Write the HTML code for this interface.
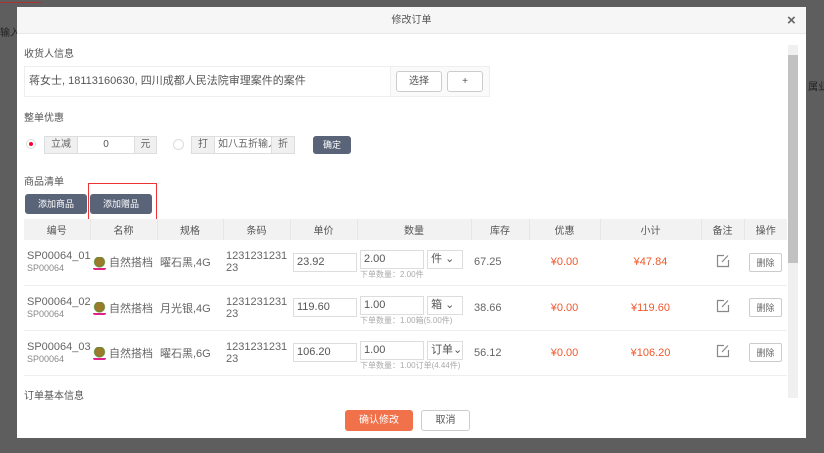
<!DOCTYPE html>
<html><head><meta charset="utf-8"><style>
*{box-sizing:border-box;margin:0;padding:0}
body{width:824px;height:453px;overflow:hidden;background:#5e5e5e;font-family:"Liberation Sans","Noto Sans CJK SC",sans-serif;font-size:10px;color:#555;position:relative}
.abs{position:absolute;white-space:nowrap}
.modal{left:17px;top:7px;width:789px;height:431px;background:#fff}
.hdr{left:0;top:0;width:789px;height:27px;background:#f6f6f6;border-bottom:1px solid #e8e8e8;text-align:center;line-height:27px;font-size:10px;color:#555}
.btn{border:1px solid #ccc;border-radius:3px;background:#fff;text-align:center;color:#555}
.dark{background:#5a6478;color:#fff;border-radius:3px;text-align:center}
.box{border:1px solid #ddd;background:#f0f0f0;text-align:center;color:#666}
table{border-collapse:collapse;position:absolute;left:24px;top:219px;width:763px;table-layout:fixed}
th{background:#f2f2f2;height:21px;font-weight:normal;color:#555;border-right:1px solid #e6e6e6;font-size:10px}
td{height:45px;border-bottom:1px solid #eee;font-size:11px;color:#666;vertical-align:middle;padding-left:3px;white-space:nowrap}
.red{color:#f0582c;font-size:11px;text-align:center;padding:0}
.inp{border:1px solid #ddd;height:19px;line-height:17px;padding-left:3px;font-size:11px;color:#555;background:#fff}
.sm{font-size:8px;color:#aaa}
.ico{display:inline-block;width:13px;height:13px;border-radius:2px;background:radial-gradient(circle at 50% 45%,#9a7a2c 0 4px,#5b8a2a 5px,#fff 6px);border-bottom:2px solid #e0218a;vertical-align:middle;margin-right:3px}
.del{display:inline-block;border:1px solid #ccc;border-radius:2px;padding:2px 6px;font-size:9px}
</style></head><body>
<div class="abs" style="left:0;top:0;width:42px;height:3px;border-bottom:1px solid #a33"></div>
<div class="abs" style="left:0;top:24px;color:#222;font-size:10px">输入</div>
<div class="abs" style="left:808px;top:78px;color:#222;font-size:10px">属业</div>
<div class="abs modal">
 <div class="abs hdr">修改订单</div>
 <div class="abs" style="left:770px;top:5px;font-size:15px;color:#666;font-weight:bold">×</div>
 <div class="abs" style="left:7px;top:38px">收货人信息</div>
 <div class="abs" style="left:7px;top:59px;width:466px;height:31px;border:1px solid #eee;background:#fafafa">
  <div class="abs" style="left:0;top:0;width:366px;height:29px;background:#fff;border-right:1px solid #eee;line-height:29px;padding-left:4px;font-size:11px">蒋女士, 18113160630, 四川成都人民法院审理案件的案件</div>
  <div class="abs btn" style="left:371px;top:4px;width:46px;height:21px;line-height:19px">选择</div>
  <div class="abs btn" style="left:422px;top:4px;width:36px;height:21px;line-height:19px">+</div>
 </div>
 <div class="abs" style="left:7px;top:102px">整单优惠</div>
 <div class="abs" style="left:9px;top:132px;width:10px;height:10px;border:1px solid #ddd;border-radius:50%;background:#fff"><div style="width:4px;height:4px;border-radius:50%;background:#f03;margin:2px"></div></div>
 <div class="abs box" style="left:27px;top:129px;width:34px;height:18px;line-height:16px">立减</div>
 <div class="abs" style="left:60px;top:129px;width:58px;height:18px;border:1px solid #ddd;text-align:center;line-height:16px">0</div>
 <div class="abs box" style="left:117px;top:129px;width:23px;height:18px;line-height:16px">元</div>
 <div class="abs" style="left:156px;top:132px;width:11px;height:11px;border:1px solid #ddd;border-radius:50%"></div>
 <div class="abs box" style="left:174px;top:129px;width:24px;height:18px;line-height:16px">打</div>
 <div class="abs" style="left:197px;top:129px;width:58px;height:18px;border:1px solid #ddd;line-height:16px;padding-left:3px;color:#666;overflow:hidden">如八五折输入</div>
 <div class="abs box" style="left:254px;top:129px;width:24px;height:18px;line-height:16px">折</div>
 <div class="abs dark" style="left:296px;top:129px;width:38px;height:18px;line-height:18px;font-size:9px">确定</div>
 <div class="abs" style="left:7px;top:166px">商品清单</div>
 <div class="abs dark" style="left:8px;top:187px;width:62px;height:20px;line-height:20px;font-size:9px">添加商品</div>
 <div class="abs dark" style="left:73px;top:187px;width:62px;height:20px;line-height:20px;font-size:9px">添加赠品</div>
 <div class="abs" style="left:71px;top:176px;width:69px;height:38px;border:1.5px solid #e33"></div>
 <div class="abs" style="left:771px;top:38px;width:10px;height:353px;background:#f0f0f0"><div style="margin-top:10px;height:208px;background:#c1c1c1"></div></div>
 <div class="abs" style="left:7px;top:380px">订单基本信息</div>
 <div class="abs" style="left:328px;top:403px;width:68px;height:21px;background:#f0714a;color:#fff;border-radius:3px;text-align:center;line-height:21px">确认修改</div>
 <div class="abs btn" style="left:404px;top:403px;width:49px;height:21px;line-height:19px">取消</div>
</div>
<table>
<colgroup><col style="width:66px"><col style="width:67px"><col style="width:66px"><col style="width:67px"><col style="width:67px"><col style="width:114px"><col style="width:58px"><col style="width:71px"><col style="width:101px"><col style="width:43px"><col style="width:43px"></colgroup>
<tr><th>编号</th><th>名称</th><th>规格</th><th>条码</th><th>单价</th><th>数量</th><th>库存</th><th>优惠</th><th>小计</th><th>备注</th><th style="border:0">操作</th></tr>
<tr><td>SP00064_01<br><span class="sm" style="color:#888;font-size:9px">SP00064</span></td><td><span class="ico"></span>自然搭档</td><td>曜石黑,4G</td><td>1231231231<br>23</td><td><div class="inp" style="width:64px">23.92</div></td><td style="padding-top:6px"><div class="inp" style="width:64px;display:inline-block">2.00</div> <div class="inp" style="width:36px;display:inline-block">件 ⌄</div><div class="sm">下单数量：2.00件</div></td><td>67.25</td><td class="red">¥0.00</td><td class="red">¥47.84</td><td style="text-align:center;padding:0"><svg width="14" height="14" viewBox="0 0 14 14"><path d="M8 1.5H1.5v11h11V6" fill="none" stroke="#888" stroke-width="1.2"/><path d="M6 8l6-6.5" stroke="#888" stroke-width="1.2"/></svg></td><td style="padding:0;text-align:center"><span class="del">删除</span></td></tr>
<tr><td>SP00064_02<br><span class="sm" style="color:#888;font-size:9px">SP00064</span></td><td><span class="ico"></span>自然搭档</td><td>月光银,4G</td><td>1231231231<br>23</td><td><div class="inp" style="width:64px">119.60</div></td><td style="padding-top:6px"><div class="inp" style="width:64px;display:inline-block">1.00</div> <div class="inp" style="width:36px;display:inline-block">箱 ⌄</div><div class="sm">下单数量：1.00箱(5.00件)</div></td><td>38.66</td><td class="red">¥0.00</td><td class="red">¥119.60</td><td style="text-align:center;padding:0"><svg width="14" height="14" viewBox="0 0 14 14"><path d="M8 1.5H1.5v11h11V6" fill="none" stroke="#888" stroke-width="1.2"/><path d="M6 8l6-6.5" stroke="#888" stroke-width="1.2"/></svg></td><td style="padding:0;text-align:center"><span class="del">删除</span></td></tr>
<tr><td>SP00064_03<br><span class="sm" style="color:#888;font-size:9px">SP00064</span></td><td><span class="ico"></span>自然搭档</td><td>曜石黑,6G</td><td>1231231231<br>23</td><td><div class="inp" style="width:64px">106.20</div></td><td style="padding-top:6px"><div class="inp" style="width:64px;display:inline-block">1.00</div> <div class="inp" style="width:36px;display:inline-block">订单⌄</div><div class="sm">下单数量：1.00订单(4.44件)</div></td><td>56.12</td><td class="red">¥0.00</td><td class="red">¥106.20</td><td style="text-align:center;padding:0"><svg width="14" height="14" viewBox="0 0 14 14"><path d="M8 1.5H1.5v11h11V6" fill="none" stroke="#888" stroke-width="1.2"/><path d="M6 8l6-6.5" stroke="#888" stroke-width="1.2"/></svg></td><td style="padding:0;text-align:center"><span class="del">删除</span></td></tr>
</table>
</body></html>
